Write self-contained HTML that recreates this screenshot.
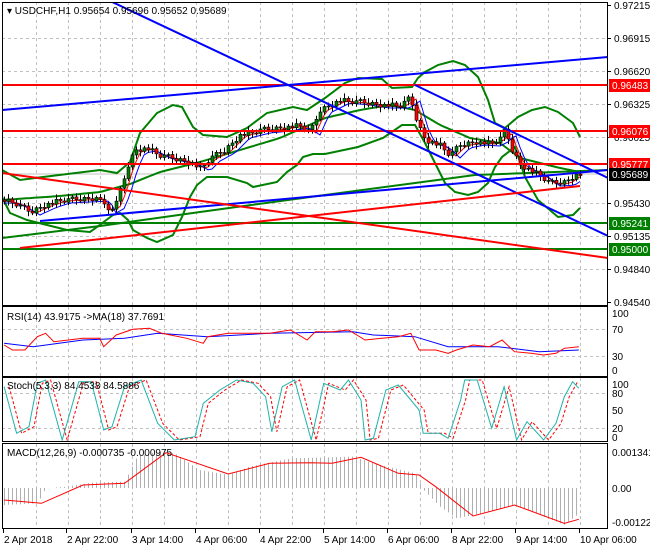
<!DOCTYPE html>
<html><head><meta charset="utf-8"><style>
html,body{margin:0;padding:0;background:#fff;width:650px;height:550px;overflow:hidden}
svg{display:block;font-family:"Liberation Sans",sans-serif;font-size:10px}
</style></head><body>
<svg id="s" width="650" height="550" xmlns="http://www.w3.org/2000/svg">
<rect width="650" height="550" fill="#fff"/>
<g id="grid" stroke="#c0c0c0" stroke-dasharray="3,3" stroke-width="1"></g>
<defs>
<clipPath id="cm"><rect x="2" y="2" width="606" height="303"/></clipPath>
<clipPath id="cr"><rect x="2" y="307" width="606" height="69"/></clipPath>
<clipPath id="cs"><rect x="2" y="378" width="606" height="63"/></clipPath>
<clipPath id="cd"><rect x="2" y="444" width="606" height="84"/></clipPath>
</defs>
<g clip-path="url(#cm)" fill="none">
<line x1="2" y1="174" x2="608" y2="174" stroke="#c0c0c0"/>
<g id="main"></g>
<g id="cndl"></g>
<line x1="2" y1="85" x2="608" y2="85" stroke="#ff0000" stroke-width="2"/>
<line x1="2" y1="131" x2="608" y2="131" stroke="#ff0000" stroke-width="2"/>
<line x1="2" y1="164" x2="608" y2="164" stroke="#ff0000" stroke-width="2"/>
<line x1="2" y1="223" x2="608" y2="223" stroke="#008000" stroke-width="2"/>
<line x1="2" y1="249" x2="608" y2="249" stroke="#008000" stroke-width="2"/>
<line x1="108" y1="0" x2="608" y2="236" stroke="#0000ff" stroke-width="2"/>
<line x1="415" y1="85" x2="608" y2="178" stroke="#0000ff" stroke-width="2"/>
<line x1="2" y1="110" x2="608" y2="57" stroke="#0000ff" stroke-width="2"/>
<line x1="40" y1="221" x2="608" y2="170" stroke="#0000ff" stroke-width="2"/>
<line x1="2" y1="173" x2="608" y2="258" stroke="#ff0000" stroke-width="2"/>
<line x1="20" y1="248" x2="580" y2="186" stroke="#ff0000" stroke-width="2"/>
</g>
<g id="rsi" clip-path="url(#cr)" fill="none"></g>
<g id="sto" clip-path="url(#cs)" fill="none"></g>
<g id="macd" clip-path="url(#cd)" fill="none"></g>
<g fill="none" stroke="#000">
<rect x="2.5" y="2.5" width="605" height="303"/>
<rect x="2.5" y="306.5" width="605" height="70"/>
<rect x="2.5" y="377.5" width="605" height="64"/>
<rect x="2.5" y="443.5" width="605" height="85"/>
</g>
<text x="7" y="14" fill="#000">▾ USDCHF,H1  0.95654 0.95696 0.95652 0.95689</text>
<text x="7" y="320" fill="#000">RSI(14) 43.9175  -&gt;MA(18) 37.7691</text>
<text x="7" y="389" fill="#000">Stoch(5,3,3) 84.4538 84.5886</text>
<text x="7" y="456" fill="#000">MACD(12,26,9) -0.000735 -0.000975</text>
<g id="axis" fill="#000"></g>
</svg>
<script>
(function(){
var NS="http://www.w3.org/2000/svg";
function el(p,t,a){var e=document.createElementNS(NS,t);for(var k in a)e.setAttribute(k,a[k]);p.appendChild(e);return e;}
function $(i){return document.getElementById(i);}
function pl(p,pts,c,w,da){var s=pts.map(function(q){return q[0].toFixed(1)+","+q[1].toFixed(1)}).join(" ");var a={points:s,stroke:c,"stroke-width":w||1,fill:"none"};if(da)a["stroke-dasharray"]=da;el(p,"polyline",a);}
function interp(k,x){if(x<=k[0][0])return k[0][1];for(var j=1;j<k.length;j++){if(x<=k[j][0]){var a=k[j-1],b=k[j];return a[1]+(b[1]-a[1])*(x-a[0])/(b[0]-a[0]);}}return k[k.length-1][1];}
function smooth(k,x0,x1,st){var r=[];for(var x=x0;x<=x1;x+=st)r.push([x,interp(k,x)]);return r;}
var g=$("grid"),x;
for(x=36;x<608;x+=32){[[2,305],[307,376],[378,441],[444,528]].forEach(function(r){el(g,"line",{x1:x+.5,y1:r[0],x2:x+.5,y2:r[1]});});}
[38,71,104,137,203,236,269].forEach(function(y){el(g,"line",{x1:2,y1:y+.5,x2:608,y2:y+.5});});
[329,356].forEach(function(y){el(g,"line",{x1:2,y1:y+.5,x2:608,y2:y+.5});});
[393,428].forEach(function(y){el(g,"line",{x1:2,y1:y+.5,x2:608,y2:y+.5});});
var m=$("main");
var ub=[[2,170],[20,180],[43,177],[100,170],[117,173],[130,162],[140,133],[157,113],[173,105],[182,107],[193,127],[203,135],[227,137],[247,128],[267,113],[293,107],[307,110],[325,98],[345,83],[358,78],[382,79],[392,88],[412,87],[418,78],[425,72],[438,65],[453,61],[465,65],[478,77],[488,100],[495,123],[505,128],[518,117],[532,110],[545,107],[558,112],[573,123],[580,137]];
var lb=[[2,197],[10,213],[27,220],[67,230],[90,232],[97,227],[113,215],[120,213],[128,220],[133,230],[147,238],[157,242],[173,235],[182,217],[190,197],[197,185],[207,177],[227,177],[247,183],[253,187],[277,182],[287,172],[297,165],[303,157],[313,154],[325,154],[358,147],[383,138],[402,125],[415,125],[425,143],[435,163],[445,183],[455,192],[468,195],[478,192],[488,183],[495,167],[502,157],[515,147],[525,177],[538,200],[558,217],[573,215],[580,208]];
var mb=[[2,200],[60,196],[100,192],[130,184],[160,172],[200,162],[240,150],[280,138],[325,118],[360,110],[390,105],[415,110],[440,125],[470,138],[500,143],[520,158],[560,168],[580,172]];
var sl=[[2,238],[100,226],[200,212],[325,195],[400,185],[475,175],[608,170]];
pl(m,ub,"#008000",2);pl(m,lb,"#008000",2);pl(m,smooth(mb,2,580,4),"#008000",2);pl(m,sl,"#008000",2);
var cp=[[4,200],[15,203],[30,212],[45,205],[60,200],[100,198],[106,210],[115,205],[122,185],[128,165],[135,150],[147,148],[160,155],[180,160],[192,163],[200,168],[210,158],[225,150],[240,135],[260,130],[280,128],[300,125],[310,132],[320,110],[340,100],[360,102],[380,105],[400,105],[410,98],[418,125],[425,140],[440,145],[450,155],[460,145],[475,142],[490,143],[500,138],[505,130],[512,150],[520,165],[540,175],[550,183],[565,182],[575,175],[580,174]];
var cg=$("cndl");
var noise=[0.3,-0.4,0.2,0.5,-0.2,-0.5,0.1,0.4,-0.3,0.0,0.45,-0.15];
var ma1=[],ma2=[];
var prev=200,n=0;
for(x=4;x<=580;x+=4){
 var base=interp(cp,x);var c=base+noise[n%12]*5;n++;
 var o=prev;prev=c;
 var tp=Math.min(o,c),bt=Math.max(o,c),h=Math.max(1,bt-tp);
 var hi=tp-2-(n%3)*1.5,lo=bt+2+(n%4);
 el(cg,"line",{x1:x+.5,y1:hi,x2:x+.5,y2:lo,stroke:"#000"});
 el(cg,"rect",{x:x-1,y:tp,width:3,height:h,fill:c<o?"#008000":"#ff0000",stroke:"#000","stroke-width":.6});
 ma1.push([x,interp(cp,Math.max(4,x-6))+1]);ma2.push([x,interp(cp,Math.max(4,x-10))+3]);}
pl(m,ma1,"#ff0000",1);pl(m,ma2,"#0000ff",1);
function cv(a,dx){return a.map(function(q){return[q[0]/2.41+(dx||0),300+q[1]/3];});}
var r=$("rsi");
pl(r,cv([[10,130],[80,140],[200,120],[300,115],[380,100],[500,110],[650,100],[850,95],[900,105],[1000,110],[1080,140],[1200,140],[1300,155],[1395,150]]),"#0000ff",1);
pl(r,cv([[10,135],[30,150],[60,150],[90,110],[110,100],[130,125],[200,115],[240,115],[250,140],[280,105],[320,88],[360,85],[390,100],[450,115],[490,130],[500,110],[550,100],[600,100],[650,100],[700,90],[740,120],[760,95],[800,95],[840,90],[880,120],[920,115],[960,110],[990,100],[1010,150],[1050,150],[1080,160],[1100,150],[1140,135],[1180,140],[1210,120],[1240,155],[1280,160],[1310,165],[1340,160],[1360,145],[1395,140]]),"#ff0000",1);
var st=[[10,260],[40,400],[70,380],[90,250],[110,240],[150,420],[190,245],[220,245],[250,390],[270,380],[300,260],[340,240],[380,370],[420,420],[470,410],[490,310],[530,270],[570,240],[610,250],[640,290],[655,395],[680,260],[710,240],[750,420],[780,250],[820,270],[840,240],[870,300],[880,420],[900,415],[930,270],[960,255],[990,300],[1010,330],[1020,400],[1060,400],[1080,415],[1110,300],[1120,240],[1150,240],[1185,385],[1215,260],[1245,420],[1270,365],[1310,420],[1340,370],[1360,290],[1380,245],[1395,265]];
var s=$("sto");
var sd=cv(st,5).filter(function(q){return q[0]<=578;});
pl(s,sd,"#ff0000",1,"3,2");pl(s,cv(st),"#20b2aa",1);
var d=$("macd");
var hk=[[10,615],[90,610],[110,565],[160,560],[220,548],[300,545],[330,470],[380,455],[420,460],[480,510],[550,525],[600,500],[700,475],[850,470],[900,490],[1000,520],[1020,570],[1060,620],[1100,655],[1160,640],[1240,615],[1300,645],[1360,675],[1390,645]];
for(x=4;x<=578;x+=4){var y=300+interp(hk,x*2.41)/3;el(d,"line",{x1:x+.5,y1:488,x2:x+.5,y2:y,stroke:"#b0b0b0"});}
pl(d,cv([[10,600],[100,610],[200,555],[300,550],[400,458],[550,522],[650,490],[750,488],[800,490],[870,472],[960,520],[1010,525],[1050,560],[1140,648],[1240,615],[1360,670],[1395,658]]),"#ff0000",1);
var ax=$("axis");
function tx(x,y,t,f){var e=el(ax,"text",{x:x,y:y,fill:f||"#000"});e.textContent=t;}
[[5,"0.97215"],[38,"0.96915"],[71,"0.96620"],[104,"0.96325"],[137,"0.96025"],[203,"0.95430"],[236,"0.95135"],[269,"0.94840"],[302,"0.94540"]].forEach(function(a){el(ax,"line",{x1:608,y1:a[0]+.5,x2:611,y2:a[0]+.5,stroke:"#000"});tx(614,a[0]+4,a[1]);});
[[85,"0.96483","#ff0000"],[131,"0.96076","#ff0000"],[164,"0.95777","#ff0000"],[174,"0.95689","#000"],[223,"0.95241","#008000"],[249,"0.95000","#008000"]].forEach(function(a){el(ax,"rect",{x:609,y:a[0]-6,width:41,height:13,fill:a[2]});tx(612,a[0]+4,a[1],"#fff");});
[[313,"100"],[329,"70"],[356,"30"],[370,"0"],[384,"100"],[393,"80"],[410,"50"],[428,"20"],[437,"0"],[452,"0.001341"],[488,"0.00"],[522,"-0.001229"]].forEach(function(a){tx(612,a[0]+4,a[1]);});
[[3,"2 Apr 2018"],[66,"2 Apr 22:00"],[131,"3 Apr 14:00"],[195,"4 Apr 06:00"],[259,"4 Apr 22:00"],[323,"5 Apr 14:00"],[387,"6 Apr 06:00"],[451,"8 Apr 22:00"],[515,"9 Apr 14:00"],[579,"10 Apr 06:00"]].forEach(function(a){el(ax,"line",{x1:a[0]+.5,y1:529,x2:a[0]+.5,y2:533,stroke:"#000"});tx(a[0]+1,543,a[1]);});
})();
</script>
</body></html>
